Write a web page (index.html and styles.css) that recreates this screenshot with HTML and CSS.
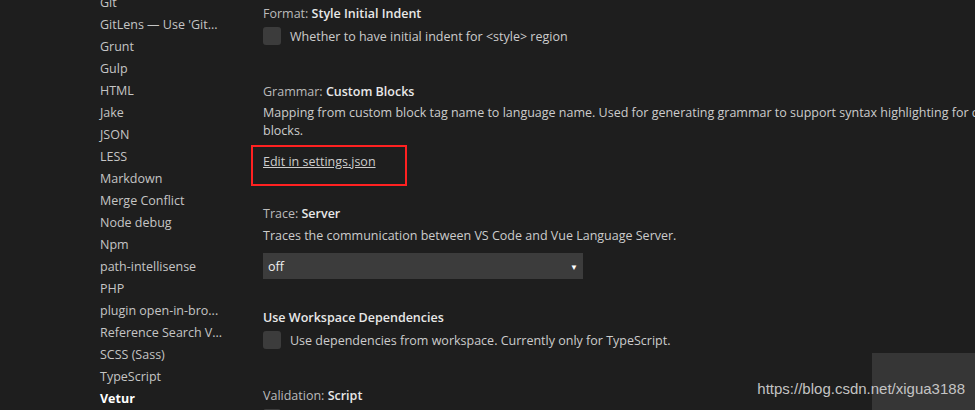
FILE: index.html
```html
<!DOCTYPE html>
<html lang="en">
<head>
  <meta charset="UTF-8">
  <title>Settings</title>
  <link rel="stylesheet" href="styles.css">
</head>
<body>
  <div class="editor">
    <ul class="toc">
      <li>Git</li>
      <li>GitLens — Use 'Git...</li>
      <li>Grunt</li>
      <li>Gulp</li>
      <li>HTML</li>
      <li>Jake</li>
      <li>JSON</li>
      <li>LESS</li>
      <li>Markdown</li>
      <li>Merge Conflict</li>
      <li>Node debug</li>
      <li>Npm</li>
      <li>path-intellisense</li>
      <li>PHP</li>
      <li>plugin open-in-bro...</li>
      <li>Reference Search V...</li>
      <li>SCSS (Sass)</li>
      <li>TypeScript</li>
      <li class="active">Vetur</li>
    </ul>

    <div class="settings">
      <div class="setting setting--check">
        <div class="title">Format: <b>Style Initial Indent</b></div>
        <label class="check-row"><span class="box"></span>Whether to have initial indent for &lt;style&gt; region</label>
      </div>

      <div class="setting setting--json">
        <div class="title">Grammar: <b>Custom Blocks</b></div>
        <div class="desc desc--wide">Mapping from custom block tag name to language name. Used for generating grammar to support syntax highlighting for custom blocks.</div>
        <div class="mark"><a href="#">Edit in settings.json</a></div>
      </div>

      <div class="setting setting--select">
        <div class="title">Trace: <b>Server</b></div>
        <div class="desc">Traces the communication between VS Code and Vue Language Server.</div>
        <div class="select">off<span class="arrow">&#9660;</span></div>
      </div>

      <div class="setting setting--check">
        <div class="title"><b>Use Workspace Dependencies</b></div>
        <label class="check-row"><span class="box"></span>Use dependencies from workspace. Currently only for TypeScript.</label>
      </div>

      <div class="setting setting--check">
        <div class="title">Validation: <b>Script</b></div>
        <label class="check-row"><span class="box"></span>Validate js/ts in &lt;script&gt;</label>
      </div>
    </div>
  </div>

  <div class="watermark">
    <span class="watermark-box"></span>
    <span class="watermark-text">https://blog.csdn.net/xigua3188</span>
  </div>
</body>
</html>
```

FILE: styles.css
```css
body {
  margin: 0;
  background: #1e1e1e;
  font-family: "Open Sans", "Noto Sans", sans-serif;
  font-size: 12.5px;
  color: #cccccc;
  overflow: hidden;
  height: 410px;
}

.editor {
  display: flex;
  width: 975px;
  height: 410px;
  overflow: hidden;
}

.toc {
  list-style: none;
  margin: -8px 0 0;
  padding: 0 0 0 100px;
  width: 151px;
  flex: none;
}

.toc li {
  height: 22px;
  line-height: 22px;
  white-space: nowrap;
  color: #c5c5c5;
}

.toc li.active {
  font-weight: bold;
  color: #ffffff;
}

.settings {
  padding: 5px 0 0 12px;
  flex: 1;
  min-width: 0;
}

.title {
  height: 18px;
  line-height: 18px;
  color: #bbbbbb;
  white-space: nowrap;
}

.title b {
  font-weight: 600;
  color: #e8e8e8;
}

.desc {
  margin-top: 3px;
  line-height: 18px;
  width: 700px;
}

.desc--wide {
  width: 780px;
}

.check-row {
  display: flex;
  align-items: center;
  margin-top: 4px;
  height: 18px;
  white-space: nowrap;
}

.box {
  width: 18px;
  height: 18px;
  border-radius: 3px;
  background: #3c3c3c;
  margin-right: 9px;
}

.setting--check {
  padding-bottom: 38px;
}

.setting--json {
  padding-bottom: 19px;
}

.setting--select .desc {
  margin-top: 4px;
}

.setting--select {
  padding-bottom: 30px;
}

.mark {
  margin: 5px 0 0 -12px;
  width: 142px;
  padding: 6px 0 13px 10px;
  border: 2px solid #ff2121;
  line-height: 18px;
}

.mark a {
  color: #cccccc;
  text-decoration: underline;
}

.select {
  display: flex;
  justify-content: space-between;
  align-items: center;
  margin-top: 8px;
  width: 310px;
  height: 26px;
  padding: 0 5px;
  background: #3c3c3c;
  color: #f0f0f0;
}

.arrow {
  font-size: 8px;
  color: #ffffff;
}

.watermark {
  position: absolute;
  right: 0;
  bottom: 0;
  width: 230px;
  height: 57px;
}

.watermark-box {
  position: absolute;
  right: 0;
  top: 0;
  width: 103px;
  height: 57px;
  background: #363636;
}

.watermark-text {
  position: absolute;
  right: 10px;
  top: 27px;
  font-family: "Liberation Sans", Arial, sans-serif;
  font-size: 15px;
  color: #c4c4c4;
  white-space: nowrap;
}
```
